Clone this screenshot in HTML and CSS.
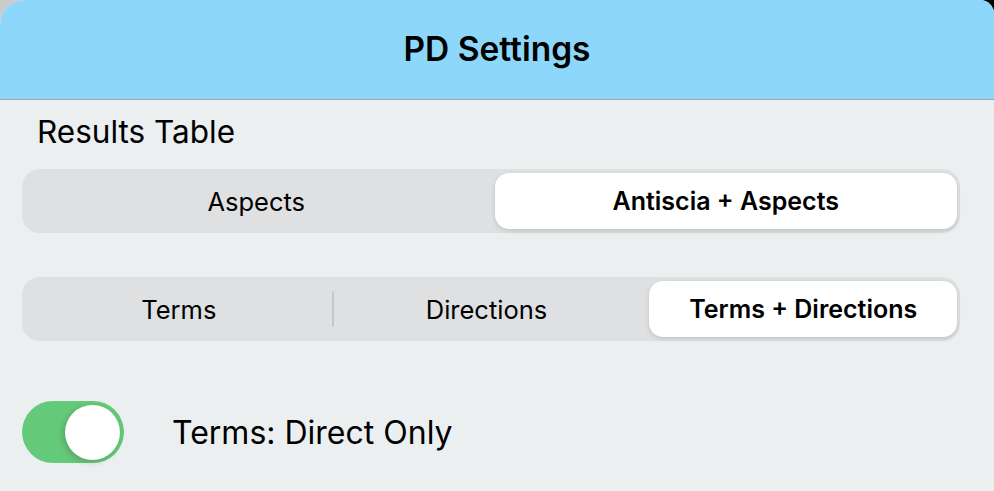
FILE: index.html
```html
<!DOCTYPE html>
<html>
<head>
<meta charset="utf-8">
<link rel="stylesheet" href="styles.css">
</head>
<body>
<div class="corner-tr"></div>
<div class="sheet">
  <header class="header">
    <h1 class="title">PD Settings</h1>
  </header>
  <main class="content">
    <div class="section-label">Results Table</div>
    <div class="segmented seg-first">
      <div class="segment">Aspects</div>
      <div class="segment selected">Antiscia + Aspects</div>
    </div>
    <div class="segmented seg-second">
      <div class="segment">Terms</div>
      <div class="divider"></div>
      <div class="segment">Directions</div>
      <div class="segment selected">Terms + Directions</div>
    </div>
    <div class="toggle-row">
      <div class="toggle on"><div class="knob"></div></div>
      <div class="toggle-label">Terms: Direct Only</div>
    </div>
  </main>
</div>
</body>
</html>
```
FILE: styles.css
```css
html, body {
  margin: 0;
  padding: 0;
  height: 100%;
}
body {
  background: #cbcbcb;
  font-family: Inter, "Noto Sans", "Liberation Sans", sans-serif;
  color: #000;
  overflow: hidden;
  position: relative;
}
.corner-tr {
  position: absolute;
  top: 0;
  right: 0;
  width: 20px;
  height: 20px;
  background: #000;
}
.sheet {
  position: relative;
  height: 100%;
  background: #ebeff0;
  border-top-left-radius: 25px;
  border-top-right-radius: 14px;
  overflow: hidden;
}
.header {
  height: 99px;
  background: #8dd8fa;
  border-bottom: 1px solid #a6a6a6;
  display: flex;
  align-items: center;
  justify-content: center;
}
.title {
  margin: 0;
  font-size: 33.5px;
  font-weight: 600;
  letter-spacing: 0;
  padding-bottom: 2px;
}
.content {
  padding: 0 34px 0 22px;
}
.section-label {
  font-size: 31.5px;
  padding: 14px 0 0 15px;
  height: 55px;
  line-height: 36px;
  box-sizing: border-box;
}
.segmented {
  display: flex;
  align-items: center;
  height: 64px;
  background: #dfe0e2;
  border-radius: 18px;
  padding: 0 3px;
  box-sizing: border-box;
}
.seg-first {
  margin-top: 14px;
}
.seg-second {
  margin-top: 44px;
}
.segment {
  flex: 1;
  height: 56px;
  display: flex;
  align-items: center;
  justify-content: center;
  font-size: 25.5px;
  font-weight: 400;
  border-radius: 14px;
}
.segment.selected {
  background: #fff;
  font-weight: 600;
  font-size: 25px;
  margin-left: 7px;
  box-shadow: 0 2px 5px rgba(0,0,0,0.12), 0 0 1px rgba(0,0,0,0.08);
}
.seg-second .segment.selected {
  margin-left: 9px;
}
.divider {
  width: 2px;
  margin: 0 -1px;
  height: 36px;
  background: #c6c7c9;
  border-radius: 1px;
}
.toggle-row {
  display: flex;
  align-items: center;
  margin-top: 60px;
}
.toggle {
  width: 102px;
  height: 62px;
  border-radius: 31px;
  background: #65c97a;
  display: flex;
  align-items: center;
  justify-content: flex-end;
  padding: 0 4px;
  box-sizing: border-box;
}
.knob {
  width: 55px;
  height: 55px;
  border-radius: 50%;
  background: #fff;
  box-shadow: -2px 2px 6px rgba(0,0,0,0.18);
}
.toggle-label {
  margin-left: 48px;
  font-size: 32px;
}
```
